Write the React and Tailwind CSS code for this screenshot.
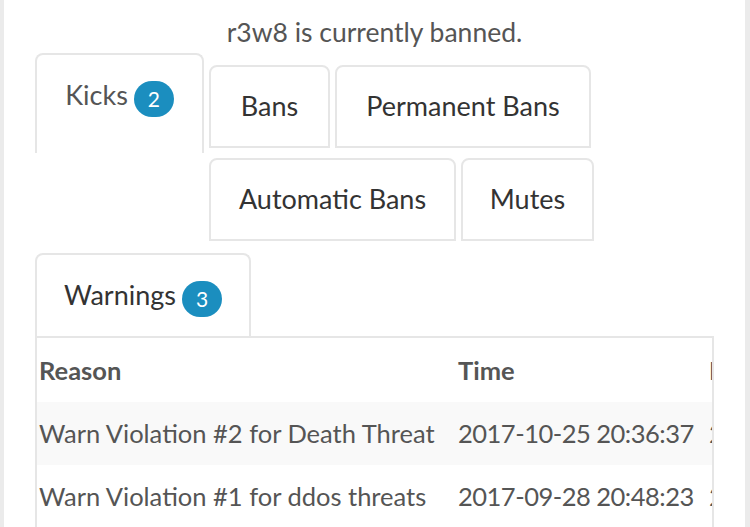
const tabsTop = [
  { label: 'Bans', width: 'w-[121px]' },
  { label: 'Permanent Bans', width: 'w-[256px]' },
]

const tabsMiddle = [
  { label: 'Automatic Bans', width: 'w-[247px]' },
  { label: 'Mutes', width: 'w-[133px]' },
]

const warnings = [
  { reason: 'Warn Violation #2 for Death Threat', time: '2017-10-25 20:36:37', expires: '2017-11-25 20:36:37' },
  { reason: 'Warn Violation #1 for ddos threats', time: '2017-09-28 20:48:23', expires: '2017-10-28 20:48:23' },
]

function Badge({ count }) {
  return (
    <span className="ml-[6px] mt-[6px] inline-flex h-[36px] w-[40px] items-center justify-center rounded-full bg-[#1b8ebf] text-[21px] leading-none text-white">
      {count}
    </span>
  )
}

function Tab({ label, width }) {
  return (
    <div
      className={`${width} flex h-[83px] items-center justify-center rounded-t-[8px] border-2 border-[#e6e6e6] text-[27px] text-[#333]`}
    >
      {label}
    </div>
  )
}

export default function App() {
  return (
    <div className="flex h-[527px] w-[750px] overflow-hidden bg-white font-['Lato',sans-serif]">
      <div className="w-[4px] shrink-0 bg-[#ebebeb]" />

      <div className="flex w-[741px] flex-col">
        <p className="pt-[14px] text-center text-[26.5px] leading-[36px] text-[#555]">r3w8 is currently banned.</p>

        <div className="mt-[3px] flex flex-col pl-[31px]">
          <div className="flex items-start gap-[5px]">
            <div className="flex h-[100px] w-[169px] flex-col rounded-t-[8px] border-2 border-b-0 border-[#e6e6e6]">
              <div className="flex h-[81px] items-center justify-center text-[27px] text-[#555]">
                Kicks
                <Badge count={2} />
              </div>
            </div>
            <div className="mt-[12px] flex gap-[5px]">
              {tabsTop.map((tab) => (
                <Tab key={tab.label} {...tab} />
              ))}
            </div>
          </div>

          <div className="ml-[174px] mt-[5px] flex gap-[5px]">
            {tabsMiddle.map((tab) => (
              <Tab key={tab.label} {...tab} />
            ))}
          </div>

          <div className="mt-[12px] flex">
            <div className="flex h-[83px] w-[216px] items-center justify-center rounded-t-[8px] border-2 border-b-0 border-[#e6e6e6] text-[27px] text-[#333]">
              Warnings
              <Badge count={3} />
            </div>
          </div>

          <div className="w-[679px] overflow-hidden border-2 border-[#e6e6e6]">
            <div className="grid w-[900px] grid-cols-[411px_251px_238px] whitespace-nowrap text-[25.5px] text-[#555]">
              <div className="flex h-[64px] items-center pl-[2px] font-bold">Reason</div>
              <div className="flex h-[64px] items-center pl-[10px] font-bold">Time</div>
              <div className="flex h-[64px] items-center pl-[10px] font-bold">Expires</div>
              {warnings.map((row, index) => (
                <div key={row.reason} className={`contents ${index % 2 === 0 ? '[&>div]:bg-[#f9f9f9]' : ''}`}>
                  <div className="flex h-[63px] items-center pl-[2px]">{row.reason}</div>
                  <div className="flex h-[63px] items-center pl-[10px] tracking-[-0.5px]">{row.time}</div>
                  <div className="flex h-[63px] items-center pl-[10px] tracking-[-0.5px]">{row.expires}</div>
                </div>
              ))}
            </div>
          </div>
        </div>
      </div>

      <div className="w-[5px] shrink-0 bg-[#ebebeb]" />
    </div>
  )
}
